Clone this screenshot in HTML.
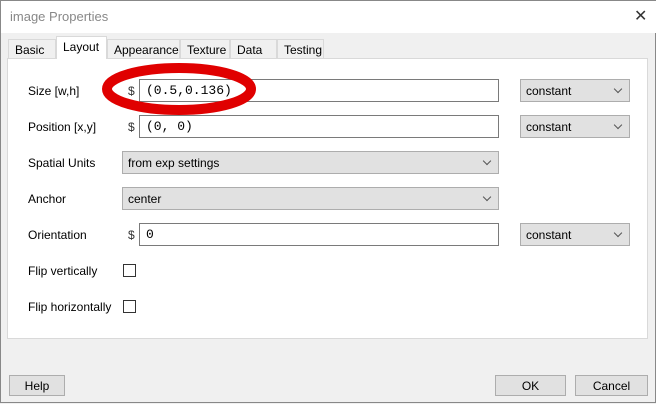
<html><head><style>
*{box-sizing:border-box;margin:0;padding:0}
body{width:656px;height:403px;background:#f0f0f0;font-family:"Liberation Sans",sans-serif;font-size:12px;color:#000;position:relative;overflow:hidden;border:1px solid #888}
.a{position:absolute}
.title{left:0;top:0;width:656px;height:32px;background:#fff}
.tab{top:38px;height:20px;border:1px solid #d9d9d9;border-bottom:none;background:#f0f0f0;padding:3px 0 0 6px}
.panel{left:6px;top:57px;width:641px;height:281px;background:#fff;border:1px solid #d9d9d9}
.lbl{left:27px}
.inp{background:#fff;border:1px solid #7a7a7a;height:23px;font-family:"Liberation Mono",monospace;font-size:13px;padding:3px 0 0 6px}
.sel{background:#e1e1e1;border:1px solid #adadad;height:23px;padding:4px 0 0 5px}
.sel:after{content:"";position:absolute;right:8px;top:6px;width:5px;height:5px;border-right:1px solid #555;border-bottom:1px solid #555;transform:rotate(45deg)}
.cb{width:13px;height:13px;border:1px solid #333;background:#fff}
.btn{top:374px;height:21px;background:#e1e1e1;border:1px solid #adadad;text-align:center;padding-top:3px}
</style></head><body>
<div class="a title"></div>
<div class="a" style="left:9px;top:8px;color:#888;font-size:13px">image Properties</div>
<div class="a" style="left:633px;top:5px;font-size:16px;color:#333">✕</div>
<div class="a tab" style="left:7px;width:48px">Basic</div>
<div class="a tab" style="left:55px;top:35px;height:23px;width:51px;background:#fff;z-index:2">Layout</div>
<div class="a tab" style="left:106px;width:73px">Appearance</div>
<div class="a tab" style="left:179px;width:50px">Texture</div>
<div class="a tab" style="left:229px;width:47px">Data</div>
<div class="a tab" style="left:276px;width:47px">Testing</div>
<div class="a panel"></div>
<div class="a lbl" style="top:83px">Size [w,h]</div>
<div class="a" style="left:127px;top:83px;color:#333">$</div>
<div class="a inp" style="left:138px;top:78px;width:360px">(0.5,0.136)</div>
<div class="a sel" style="left:519px;top:78px;width:110px">constant</div>
<div class="a lbl" style="top:119px">Position [x,y]</div>
<div class="a" style="left:127px;top:119px;color:#333">$</div>
<div class="a inp" style="left:138px;top:114px;width:360px">(0, 0)</div>
<div class="a sel" style="left:519px;top:114px;width:110px">constant</div>
<div class="a lbl" style="top:155px">Spatial Units</div>
<div class="a sel" style="left:121px;top:150px;width:377px">from exp settings</div>
<div class="a lbl" style="top:191px">Anchor</div>
<div class="a sel" style="left:121px;top:186px;width:377px">center</div>
<div class="a lbl" style="top:227px">Orientation</div>
<div class="a" style="left:127px;top:227px;color:#333">$</div>
<div class="a inp" style="left:138px;top:222px;width:360px">0</div>
<div class="a sel" style="left:519px;top:222px;width:110px">constant</div>
<div class="a lbl" style="top:263px">Flip vertically</div>
<div class="a cb" style="left:122px;top:263px"></div>
<div class="a lbl" style="top:299px">Flip horizontally</div>
<div class="a cb" style="left:122px;top:299px"></div>
<svg class="a" style="left:0;top:0" width="656" height="403"><ellipse cx="178" cy="88" rx="72" ry="21" fill="none" stroke="#e00000" stroke-width="10"/></svg>
<div class="a btn" style="left:8px;width:56px">Help</div>
<div class="a btn" style="left:494px;width:71px">OK</div>
<div class="a btn" style="left:574px;width:73px">Cancel</div>
</body></html>
